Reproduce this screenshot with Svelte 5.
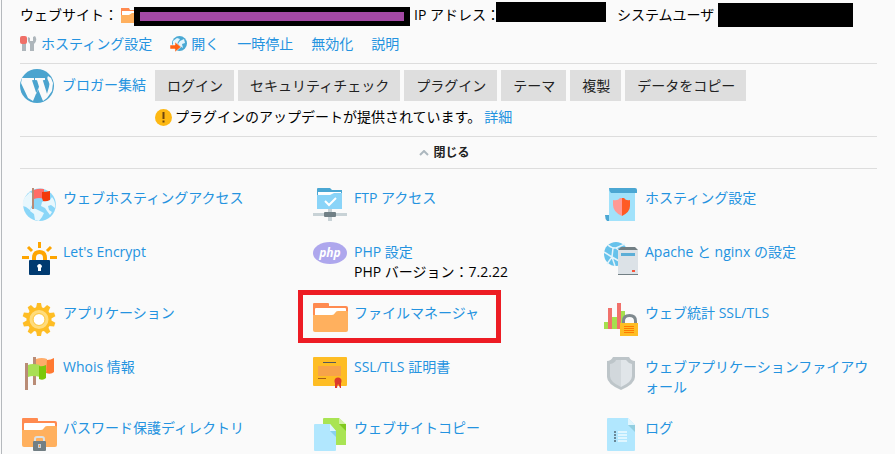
<script>
  const actions = ['ログイン', 'セキュリティチェック', 'プラグイン', 'テーマ', '複製', 'データをコピー'];

  const tools = [
    { icon: 'globe', label: 'ウェブホスティングアクセス' },
    { icon: 'ftp', label: 'FTP アクセス' },
    { icon: 'hosting', label: 'ホスティング設定' },
    { icon: 'encrypt', label: "Let's Encrypt" },
    { icon: 'php', label: 'PHP 設定', note: 'PHP バージョン：7.2.22' },
    { icon: 'server', label: 'Apache と nginx の設定' },
    { icon: 'gear', label: 'アプリケーション' },
    { icon: 'folder', label: 'ファイルマネージャ', marked: true },
    { icon: 'stats', label: 'ウェブ統計 SSL/TLS' },
    { icon: 'flags', label: 'Whois 情報' },
    { icon: 'cert', label: 'SSL/TLS 証明書' },
    { icon: 'shield', label: 'ウェブアプリケーションファイアウォール' },
    { icon: 'locked', label: 'パスワード保護ディレクトリ' },
    { icon: 'copy', label: 'ウェブサイトコピー' },
    { icon: 'log', label: 'ログ' }
  ];

  const teeth = [0, 36, 72, 108, 144, 180, 216, 252, 288, 324];
</script>

{#snippet folderShape()}
  <path fill="#ff8a50" d="M1 0h14q1 0 1 1v2h17q2 0 2 2v20H0V1q0-1 1-1z" />
  <path fill="#fff" d="M3 5h29q1 0 1 1v6H2V6q0-1 1-1z" />
  <path fill="#ffb05e" d="M0 12h19q2 0 3-2t3-2h9q1 0 1 1v18q0 2-2 2H2q-2 0-2-2z" />
{/snippet}

{#snippet art(name)}
  <svg class="art" viewBox="0 0 36 33" aria-hidden="true">
    {#if name === 'globe'}
      <circle cx="17.5" cy="16.7" r="16.3" fill="#8ad6f8" />
      <path fill="#e8f7fd" d="M3 9l5-5 2 1v12l-2 5-4-3-3-1q-1-5 2-9zM9 20l5 1 8 4-2 4-3 4-4-1-1-6-4-3zM22 13l6-1 2-3q4 5 3 11l-4-3-3 1 1 4 3 2-2 3-3-4-2-3-4-2 1-4z" />
      <path fill="#ff6c67" d="M12 2q5-2 10-1v10q-5-2-10 0z" />
      <path fill="#f23a0c" d="M20 4q4 0 8-1v9q-4 2-7 1l-1-3z" />
      <path fill="#b98c76" d="M10 0h2v21h-2z" />
    {:else if name === 'ftp'}
      <path fill="#4ba7d3" d="M4 1q0-1 1-1h12l2 2h10v6H4z" />
      <path fill="#fff" d="M5 4h23v5H5z" />
      <path fill="#8ad4f8" d="M4 7h13l4-2h8v16H4z" />
      <path fill="none" stroke="#fff" stroke-width="2" d="M12 13l4 4 7-7" />
      <path fill="#c8d2d6" d="M15 21h4v12h-4zM0 25h34v3H0z" />
      <rect x="11" y="24" width="12" height="5" rx="1" fill="#718086" />
    {:else if name === 'hosting'}
      <path fill="#4ba7d3" d="M1 27h5v6H3q-2-2-2-6z" />
      <path fill="#a1e2fb" d="M5 1h26v32H5z" />
      <path fill="#4ba7d3" d="M5 0h26q2 0 2 2v3H7Q5 3 5 0z" />
      <path fill="#ff9995" d="M9 12q5 1 7-2h2v18Q9 24 9 17z" />
      <path fill="#ff5a25" d="M18 10h2q2 3 6 2v6q0 6-8 10z" />
    {:else if name === 'encrypt'}
      <path fill="none" stroke="#fea500" stroke-width="3" d="M17.500 0v6M6 5l4 4M29 5l-4 4M0 15.500h7M28 15.500h7" />
      <path fill="none" stroke="#fea500" stroke-width="4" d="M12 19v-3q0-6 5.500-6t5.500 6v3" />
      <rect x="7" y="18" width="21" height="15" rx="1" fill="#003a70" />
      <path fill="#fff" d="M15 24q1-2 2.500-2t2.500 2q0 1-1 2v3h-3v-3z" />
    {:else if name === 'php'}
      <ellipse cx="17" cy="11" rx="17" ry="11" fill="#aea7ed" />
      <text class="php" x="17" y="15" text-anchor="middle">php</text>
    {:else if name === 'server'}
      <circle cx="12" cy="12" r="12" fill="#66c2eb" />
      <path fill="none" stroke="#e4f4fb" stroke-width="1.500" d="M4 3q3 3 8 3l9-4M9 6l-1 9 7 4M0 10l8 5-5 7M8 15l3 9M12 6l5 4 6-1" />
      <path fill="#727f84" d="M14 8l3-3h14l3 3v25H14z" />
      <path fill="#dce2e7" d="M14 8h20v24H14z" />
      <path fill="#5caed7" d="M17 11h14v3H17z" />
      <path fill="#f9553a" d="M28 28h3v2h-3z" />
    {:else if name === 'gear'}
      {#each teeth as turn}
        <path fill="#febd24" d="M14 5l1-5h4l1 5z" transform="rotate({turn} 17 16.500)" />
      {/each}
      <circle cx="17" cy="16.500" r="12.500" fill="#febd24" />
      <circle cx="17" cy="16.500" r="7.500" fill="#fff" stroke="#ffdc7b" stroke-width="4" />
      <circle cx="17" cy="16.500" r="6" fill="none" stroke="#fec944" stroke-width="1" />
    {:else if name === 'folder'}
      {@render folderShape()}
    {:else if name === 'stats'}
      <path fill="#a5e04e" d="M0 19h4v7H0zM8 14h5v12H8zM17 8h4v18h-4z" />
      <path fill="#f1716b" d="M4 5h4v21H4zM13 0h4v26h-4z" />
      <path fill="#fafafa" d="M19 20q0-8 6.500-8t6.500 8z" />
      <path fill="none" stroke="#7f898e" stroke-width="3" d="M19.500 21v-3q0-5.500 6-5.500t6 5.500v3" />
      <path fill="#febd24" d="M16 20h18v13H16z" />
      <path stroke="#ff7900" d="M20 23.500h10M20 25.500h10M20 27.500h10M20 29.500h10" />
    {:else if name === 'flags'}
      <path fill="#b98c76" d="M11 0h3v28h-3z" />
      <path fill="#ffac69" d="M14 2q6-2 11 0v11q-6-2-11 0z" />
      <path fill="#ff7931" d="M25 3q4 0 7-2v14q-3 3-8 1z" />
      <path fill="#b98c76" d="M3 6h3v27H3z" />
      <path fill="#a9df55" d="M6 8q4-2 12 0v12q-7-2-12 0z" />
      <path fill="#7bc70a" d="M17 9q3 1 7-1v13q-3 3-7 1z" />
    {:else if name === 'cert'}
      <rect width="34" height="29" rx="1" fill="#febd24" />
      <path fill="#f7a34a" d="M5 9h23v10H5z" />
      <path stroke="#56595b" d="M10 5.500h13" />
      <path stroke="#a65e19" d="M5 21.500h8" />
      <path fill="#dc3a2b" d="M22 26h3l-1 5h-2zM25 26h3v5h-1z" />
      <circle cx="25" cy="24" r="3.500" fill="#dc3a2b" />
    {:else if name === 'shield'}
      <path fill="#bdc5c9" d="M3 4q4 0 6-4h16q2 4 6 4v16q0 7-14 13Q3 27 3 20z" />
      <path fill="#d2d8dc" d="M6 7q5-1 6-4h5v27Q6 25 6 19z" />
      <path fill="#e0e5e9" d="M17 3h5q2 3 6 4v12q0 6-11 11z" />
    {:else if name === 'locked'}
      {@render folderShape()}
      <path fill="none" stroke="#dce1e4" stroke-width="2" d="M13 24v-3q0-2 2-2h5q2 0 2 2v3" />
      <rect x="11" y="23" width="13" height="10" rx="1" fill="#727f84" />
      <path fill="#c9ced1" d="M16 26h3v4h-3z" />
      <path fill="#ff9b43" d="M17 27h1v2h-1z" />
    {:else if name === 'copy'}
      <path fill="#a9e454" d="M11 0h15l7 7v20H10V1q0-1 1-1z" />
      <path fill="#d1f2a3" d="M26 0l7 6h-7z" />
      <path fill="#80c91f" d="M26 6h7v7z" />
      <path fill="#b1e7fe" d="M2 6h15l6 7v19q0 1-1 1H2q-1 0-1-1V7q0-1 1-1z" />
      <path fill="#def6fe" d="M17 6l6 7h-6z" />
      <path fill="#88d1f0" d="M17 13h6v6z" />
    {:else if name === 'log'}
      <path fill="#b1e7fe" d="M4 0h20l7 7v25q0 1-1 1H4q-1 0-1-1V1q0-1 1-1z" />
      <path fill="#e2f6fe" d="M24 0l7 7h-7z" />
      <path fill="#92cee0" d="M24 7h7v7z" />
      <path fill="#698797" d="M10 13h2v2h-2zM10 16h2v2h-2zM10 19h2v2h-2zM10 22h2v2h-2z" />
      <path fill="#dff6ff" d="M14 13h9v2h-9zM14 16h9v2h-9zM14 19h9v2h-9zM14 22h9v2h-9z" />
    {/if}
  </svg>
{/snippet}

<main>
  <div class="summary">
    <span>ウェブサイト：</span>
    <svg class="mini-folder" viewBox="0 0 18 15" aria-hidden="true">
      <path fill="#ff8a50" d="M0 0h8l1 2h9v8H0z" />
      <path fill="#fff" d="M1 3h16v5H1z" />
      <path fill="#ffb05e" d="M0 7h8l3-2h7v10H0z" />
    </svg>
    <span class="mask site"></span>
    <span class="ip">IP アドレス：</span>
    <span class="mask address"></span>
    <span class="user">システムユーザ</span>
    <span class="mask account"></span>
  </div>

  <nav class="links">
    <a href="#hosting">
      <svg viewBox="0 0 17 16" aria-hidden="true">
        <path fill="#aeb6bb" d="M2 7h4v8H2zM8 1l2 1v3h3V1l2-1q3 4-1 8v7h-4V8q-3-2-2-7z" />
        <rect width="7" height="8" rx="2" fill="#ef6f67" />
      </svg>
      ホスティング設定
    </a>
    <a href="#open">
      <svg viewBox="0 0 17 16" aria-hidden="true">
        <circle cx="9.500" cy="7.500" r="7.500" fill="#4aa9d4" />
        <path fill="#e4f5fc" d="M3 5l4-3 3 1-2 3-1 3-4 1zM10 5l4-2 1 4-3 1 1 4-3-2-2-2z" />
        <path fill="#ff6112" stroke="#fafafa" stroke-width=".5" d="M0 9h5V6l6 5-6 5v-3H0z" />
      </svg>
      開く
    </a>
    <a href="#suspend">一時停止</a>
    <a href="#disable">無効化</a>
    <a href="#description">説明</a>
  </nav>

  <section class="wordpress">
    <svg class="wp" viewBox="0 0 34 34" aria-hidden="true">
      <circle cx="17" cy="17" r="17" fill="#4ba4cf" />
      <path fill="#fafafa" d="M4 9h10v2l-2 .2 4.500 13.500 2.500-7-2-6.500-2-.2V9h10v2l-2.200.2 4.200 13.500 2-7q1-3-.5-5.500-2-3-.5-5.200l3 2 2 5-1 8L27 29l-4 3-5-12-5 12-5-3L1 14l1-5z" />
    </svg>
    <a class="blog" href="#wordpress">ブロガー集結</a>
    <div class="tasks">
      <div class="buttons">
        {#each actions as action}
          <button type="button">{action}</button>
        {/each}
      </div>
      <p class="notice">
        <svg viewBox="0 0 17 17" aria-hidden="true">
          <circle cx="8.500" cy="8.500" r="8.500" fill="#fdb813" />
          <path fill="#6d4510" d="M7.500 3h2v7h-2zM7.500 11.500h2v2h-2z" />
        </svg>
        <span>プラグインのアップデートが提供されています。</span>
        <a href="#details">詳細</a>
      </p>
    </div>
  </section>

  <button type="button" class="collapse">
    <svg viewBox="0 0 10 6" aria-hidden="true">
      <path fill="none" stroke="#acb7be" stroke-width="2" d="M1 5l4-4 4 4" />
    </svg>
    閉じる
  </button>

  <ul class="tools">
    {#each tools as tool}
      <li class:marked={tool.marked}>
        {@render art(tool.icon)}
        <div>
          <a href="#{tool.icon}">{tool.label}</a>
          {#if tool.note}<p>{tool.note}</p>{/if}
        </div>
      </li>
    {/each}
  </ul>
</main>

<style>
  :global(body) {
    margin: 0;
    background: #fafafa;
  }

  main {
    box-sizing: border-box;
    min-height: 100vh;
    margin-left: 1px;
    padding: 0 18px;
    border-left: 1px solid #b5b9bd;
    color: #000;
    font: 400 14px/20px 'Open Sans', 'Noto Sans CJK JP', sans-serif;
  }

  svg {
    display: block;
    flex: none;
  }

  p {
    margin: 0;
  }

  a {
    color: #2493e0;
    text-decoration: none;
  }

  .summary {
    display: flex;
    align-items: center;
    height: 30px;
    white-space: nowrap;
  }

  .mini-folder {
    width: 18px;
    height: 15px;
    margin-left: 3px;
  }

  .mask {
    flex: none;
    box-sizing: border-box;
    background: #000;
  }

  .site {
    position: relative;
    width: 276px;
    height: 19px;
    margin: 2px 4px 0 -5px;
    border: 5px solid #000;
    border-width: 5px 6px;
    background: #a349a4;
  }

  .address {
    position: relative;
    width: 110px;
    height: 20px;
    margin: 0 11px 6px -4px;
  }

  .account {
    width: 135px;
    height: 24px;
    margin-left: 4px;
  }

  .links {
    display: flex;
    align-items: center;
    gap: 18px;
    height: 28px;
    padding-bottom: 5px;
    border-bottom: 1px solid #ddd;
  }

  .links a {
    display: flex;
    align-items: center;
    gap: 4px;
  }

  .links svg {
    width: 17px;
    height: 16px;
  }

  .wordpress {
    display: flex;
    padding-top: 5px;
  }

  .wp {
    width: 34px;
    height: 34px;
  }

  .blog {
    margin: 6px 9px 0 8px;
    white-space: nowrap;
  }

  .tasks {
    padding-top: 1px;
  }

  .buttons {
    display: flex;
    gap: 4px;
  }

  .buttons button {
    height: 31px;
    padding: 0 11px 0 12px;
    border: 0;
    background: #dedede;
    color: #222;
    font: inherit;
    white-space: nowrap;
  }

  .notice {
    display: flex;
    align-items: center;
    gap: 3px;
    height: 32px;
    padding-bottom: 3px;
  }

  .notice svg {
    width: 17px;
    height: 17px;
  }

  .collapse {
    display: flex;
    align-items: center;
    justify-content: center;
    gap: 4px;
    width: 100%;
    height: 33px;
    padding: 0 8px 0 0;
    border: solid #ddd;
    border-width: 1px 0;
    background: none;
    color: #222;
    font: 700 12px/20px 'Open Sans', 'Noto Sans CJK JP', sans-serif;
  }

  .collapse svg {
    width: 10px;
    height: 6px;
  }

  .tools {
    display: grid;
    grid-template-columns: repeat(3, 1fr);
    gap: 21px 18px;
    margin: 0;
    padding: 19px 0 0 2px;
    list-style: none;
  }

  .tools li {
    position: relative;
    display: flex;
    align-items: flex-start;
    gap: 5px;
  }

  .art {
    width: 36px;
    height: 33px;
  }

  .php {
    fill: #fff;
    font: italic 700 12px 'Open Sans', sans-serif;
  }

  .marked::after {
    content: '';
    position: absolute;
    top: -13px;
    left: -15px;
    width: 193px;
    height: 43px;
    border: 5px solid #ed1c24;
    pointer-events: none;
  }
</style>
